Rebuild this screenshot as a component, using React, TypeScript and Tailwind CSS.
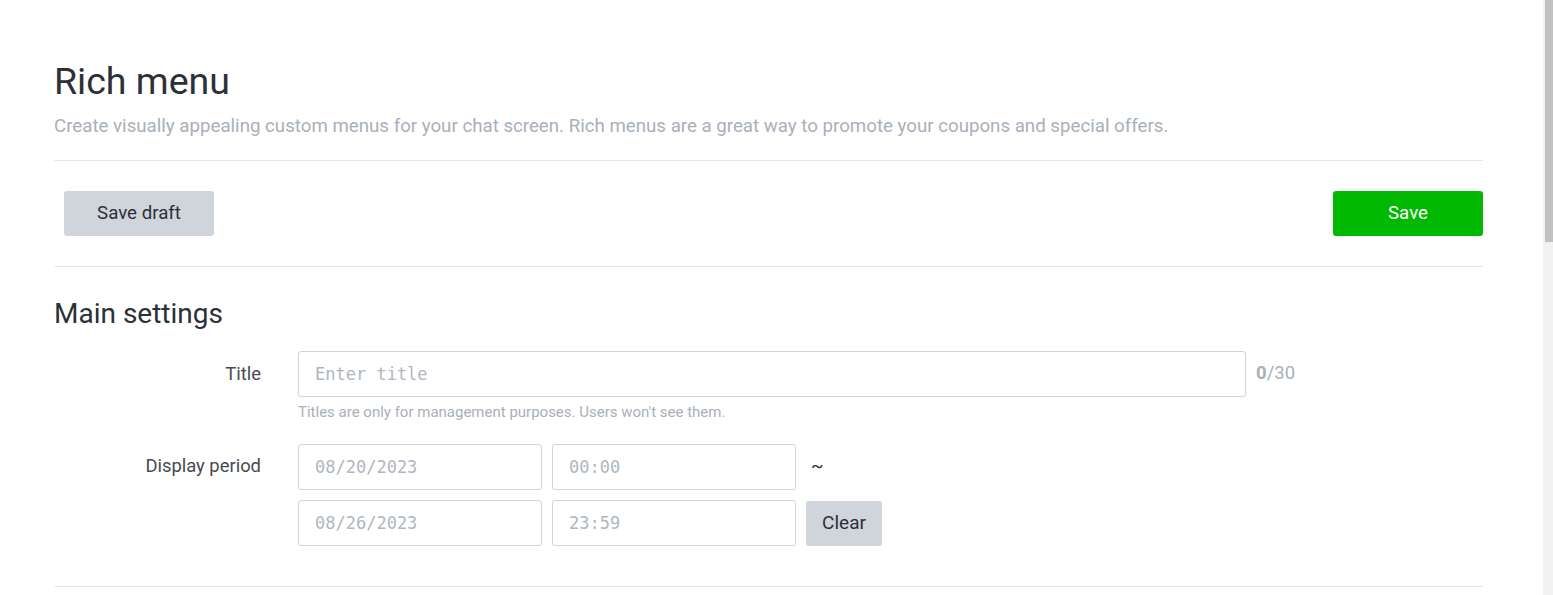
import React from "react";

const mono = "font-['DejaVu_Sans_Mono',monospace]";

function Field({ placeholder, className }: { placeholder: string; className: string }) {
  return (
    <input
      placeholder={placeholder}
      className={`h-[46px] rounded-[3px] border border-[#cfd3da] bg-white px-4 text-[17px] text-[#2c3038] outline-none placeholder:text-[#b0b6bf] ${mono} ${className}`}
    />
  );
}

export default function App() {
  return (
    <div className="flex min-h-[595px] bg-white font-['Roboto',sans-serif] text-[#2c3038]">
      <div className="min-h-[900px] flex-1 pl-[54px] pr-[60px] pt-[58px]">
        {/* Header */}
        <h1 className="text-[37.5px] font-normal leading-[46px]">Rich menu</h1>
        <p className="mt-[10px] text-[18.7px] leading-[24px] text-[#a9b0ba]">
          Create visually appealing custom menus for your chat screen. Rich menus are a great way to promote your coupons and special offers.
        </p>

        <div className="mt-[22px] border-t border-[#e4e6ea]" />

        {/* Actions */}
        <div className="flex items-center justify-between py-[30px] pl-[10px]">
          <button className="h-[45px] w-[150px] rounded-[3px] bg-[#d0d4db] text-[18.7px] text-[#2c3038]">Save draft</button>
          <button className="h-[45px] w-[150px] rounded-[3px] bg-[#00b900] text-[18.7px] text-white">Save</button>
        </div>

        <div className="border-t border-[#e4e6ea]" />

        {/* Main settings */}
        <h2 className="mt-[30px] text-[28px] leading-[34px]">Main settings</h2>

        <div className="mt-[20px] flex">
          <div className="w-[207px] pt-[11px] text-right text-[18.4px] leading-[24px] text-[#464a52]">Title</div>
          <div className="ml-[37px]">
            <div className="flex items-center">
              <Field placeholder="Enter title" className="w-[948px]" />
              <span className="ml-[10px] text-[18.5px] text-[#a9b0ba]">
                <b className="font-bold">0</b>/30
              </span>
            </div>
            <p className="mt-[6px] text-[15px] leading-[18px] text-[#a9b0ba]">
              Titles are only for management purposes. Users won't see them.
            </p>
          </div>
        </div>

        <div className="mt-[23px] flex">
          <div className="w-[207px] pt-[10px] text-right text-[18.4px] leading-[24px] text-[#464a52]">Display period</div>
          <div className="ml-[37px] flex flex-col gap-[10px]">
            <div className="flex items-center gap-[10px]">
              <Field placeholder="08/20/2023" className="w-[244px]" />
              <Field placeholder="00:00" className="w-[244px]" />
              <span className="ml-[5px] text-[18.5px]">~</span>
            </div>
            <div className="flex items-center gap-[10px]">
              <Field placeholder="08/26/2023" className="w-[244px]" />
              <Field placeholder="23:59" className="w-[244px]" />
              <button className="h-[45px] w-[76px] rounded-[3px] bg-[#d0d4db] text-[19px] text-[#2c3038]">Clear</button>
            </div>
          </div>
        </div>

        <div className="mt-[40px] border-t border-[#e4e6ea]" />
      </div>

      {/* Scrollbar strip */}
      <div className="w-[10px] shrink-0 bg-[#f1f1f1]">
        <div className="ml-[2px] h-[242px] bg-[#c1c1c1]" />
      </div>
    </div>
  );
}
